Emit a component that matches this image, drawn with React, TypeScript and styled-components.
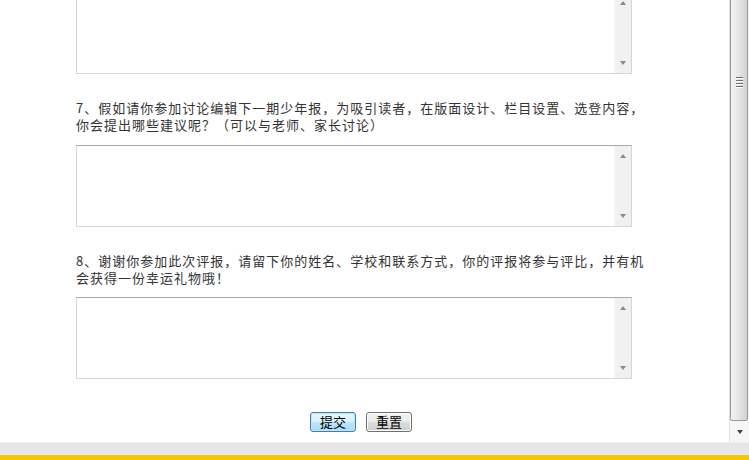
import styled, { createGlobalStyle } from "styled-components";

const GlobalStyle = createGlobalStyle`
  html, body {
    margin: 0;
    padding: 0;
    background: #fff;
  }
  body {
    font-family: "Liberation Sans", "Noto Sans CJK SC", sans-serif;
  }
`;

// 整个窗口
const Screen = styled.div`
  width: 749px;
  height: 460px;
  display: flex;
  flex-direction: column;
  overflow: hidden;
`;

const Viewport = styled.div`
  flex: 1;
  display: flex;
  min-height: 0;
`;

const Content = styled.div`
  flex: 1;
  overflow: hidden;
`;

const Form = styled.form`
  width: 577px;
  margin: -8px auto 0;
`;

const Question = styled.p`
  margin: 25px 0 0;
  font-size: 13px;
  letter-spacing: 1px;
  line-height: 17px;
  color: #333;
  font-family: "Noto Sans CJK SC", sans-serif;
`;

// 文本框
const TextBox = styled.div<{ $gap?: number }>`
  width: 556px;
  height: 82px;
  box-sizing: border-box;
  margin-top: ${(p) => p.$gap ?? 11}px;
  display: flex;
  border: 1px solid #d6d6d6;
  border-top-color: #a8a8a8;
  background: #fff;
`;

const Area = styled.textarea`
  flex: 1;
  border: none;
  resize: none;
  outline: none;
  padding: 2px;
  font-size: 13px;
  background: transparent;
`;

const Rail = styled.div`
  width: 16px;
  background: #f1f1f1;
  border-left: 1px solid #f8f8f8;
  display: flex;
  flex-direction: column;
  justify-content: space-between;
  align-items: center;
  padding: 8px 0;
`;

const Arrow = styled.span<{ $down?: boolean; $color?: string }>`
  width: 0;
  height: 0;
  border-left: 3.5px solid transparent;
  border-right: 3.5px solid transparent;
  ${(p) =>
    p.$down
      ? `border-top: 4px solid ${p.$color ?? "#8a8a8a"};`
      : `border-bottom: 4px solid ${p.$color ?? "#8a8a8a"};`}
`;

const Buttons = styled.div`
  display: flex;
  justify-content: center;
  gap: 10px;
  margin: 33px 0 0 -7px;
`;

const Btn = styled.button<{ $focused?: boolean }>`
  width: 46px;
  height: 20px;
  padding: 0;
  font-size: 13px;
  font-family: "Noto Sans CJK SC", sans-serif;
  color: #000;
  border-radius: 3px;
  border: 1px solid ${(p) => (p.$focused ? "#3c7fb1" : "#707070")};
  background: ${(p) =>
    p.$focused
      ? "linear-gradient(#eaf6fd 0%, #d9f0fc 50%, #bee6fd 51%, #a7d9f5 100%)"
      : "linear-gradient(#f2f2f2 0%, #ebebeb 50%, #dddddd 51%, #cfcfcf 100%)"};
  box-shadow: inset 0 0 0 1px ${(p) => (p.$focused ? "#bfe6f8" : "#fcfcfc")};
  line-height: 18px;
`;

// 页面滚动条
const PageRail = styled.div`
  width: 20px;
  box-sizing: border-box;
  border-left: 1px solid #e0e0e0;
  background: #f6f6f6;
  display: flex;
  flex-direction: column;
`;

const Thumb = styled.div`
  flex: 1;
  margin: -4px 1px 0 0;
  border: 1px solid #999;
  border-radius: 2px;
  background: linear-gradient(90deg, #f4f4f4 0%, #e6e6e6 45%, #d2d2d2 100%);
  display: flex;
  flex-direction: column;
  align-items: center;
  padding-top: 80px;
  gap: 2px;
`;

const Grip = styled.span`
  width: 7px;
  height: 1px;
  background: #6d6d6d;
  box-shadow: 0 1px 0 #fff;
`;

const RailButton = styled.div`
  height: 21px;
  display: flex;
  align-items: center;
  justify-content: center;
`;

const Band = styled.div`
  height: 12px;
  background: #e6e6e6;
  border-top: 1px solid #efefef;
`;

const Yellow = styled.div`
  height: 5px;
  background: #f7c400;
`;

function Box({ gap }: { gap?: number }) {
  return (
    <TextBox $gap={gap}>
      <Area />
      <Rail>
        <Arrow />
        <Arrow $down />
      </Rail>
    </TextBox>
  );
}

export default function App() {
  return (
    <>
      <GlobalStyle />
      <Screen>
        <Viewport>
          <Content>
            <Form onSubmit={(e) => e.preventDefault()}>
              <Box gap={0} />
              <Question>
                7、假如请你参加讨论编辑下一期少年报，为吸引读者，在版面设计、栏目设置、选登内容，你会提出哪些建议呢？（可以与老师、家长讨论）
              </Question>
              <Box gap={12} />
              <Question>
                8、谢谢你参加此次评报，请留下你的姓名、学校和联系方式，你的评报将参与评比，并有机会获得一份幸运礼物哦！
              </Question>
              <Box />
              <Buttons>
                <Btn type="submit" $focused>提交</Btn>
                <Btn type="reset">重置</Btn>
              </Buttons>
            </Form>
          </Content>
          <PageRail>
            <Thumb>
              <Grip />
              <Grip />
              <Grip />
              <Grip />
            </Thumb>
            <RailButton>
              <Arrow $down $color="#444" />
            </RailButton>
          </PageRail>
        </Viewport>
        <Band />
        <Yellow />
      </Screen>
    </>
  );
}
